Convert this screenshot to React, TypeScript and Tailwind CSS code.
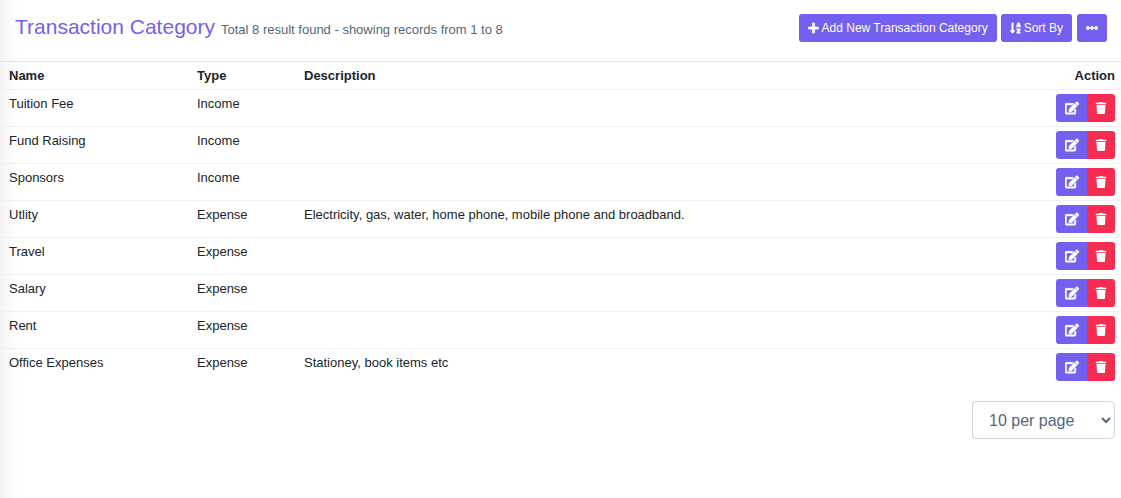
import { FaEdit, FaEllipsisH, FaPlus, FaSortAlphaDown, FaTrash } from "react-icons/fa";

const categories = [
  { name: "Tuition Fee", type: "Income", description: "" },
  { name: "Fund Raising", type: "Income", description: "" },
  { name: "Sponsors", type: "Income", description: "" },
  {
    name: "Utlity",
    type: "Expense",
    description: "Electricity, gas, water, home phone, mobile phone and broadband.",
  },
  { name: "Travel", type: "Expense", description: "" },
  { name: "Salary", type: "Expense", description: "" },
  { name: "Rent", type: "Expense", description: "" },
  { name: "Office Expenses", type: "Expense", description: "Stationey, book items etc" },
];

const toolbarButton =
  "inline-flex h-7 items-center gap-[3px] rounded-[3px] bg-[#7460ee] px-[9px] text-xs text-white hover:bg-[#563dea]";

const TransactionCategoryPage = () => {
  return (
    <main className="min-h-screen bg-linear-to-r from-[#f4f4f4] to-white to-[18px] font-['Liberation_Sans',Arial,sans-serif] text-[13px] leading-5 text-[#212529]">
      {/* Header */}
      <header className="flex items-start justify-between pt-3.5 pr-3.5 pb-[19px] pl-[15px]">
        <div className="flex items-baseline gap-1.5">
          <h1 className="text-[21px] leading-[26px] text-[#7460ee]">Transaction Category</h1>
          <small className="text-[13px] text-[#54667a]">
            Total {categories.length} result found - showing records from 1 to {categories.length}
          </small>
        </div>
        <div className="flex">
          <button type="button" className={`${toolbarButton} mr-1`}>
            <FaPlus className="h-3 w-[11px] stroke-[24]" />
            Add New Transaction Category
          </button>
          <button type="button" className={`${toolbarButton} mr-[5px]`}>
            <FaSortAlphaDown className="h-3 w-[11px] stroke-[20]" />
            Sort By
          </button>
          <button type="button" aria-label="More options" className={toolbarButton}>
            <FaEllipsisH className="size-3 stroke-[20]" />
          </button>
        </div>
      </header>

      {/* Categories */}
      <table className="w-full border-collapse">
        <thead>
          <tr className="border-t border-[#dee2e6] text-left leading-[19px]">
            <th className="w-[188px] py-1 pl-[9px]">Name</th>
            <th className="w-[107px] py-1 pl-[9px]">Type</th>
            <th className="py-1 pl-[9px]">Description</th>
            <th className="py-1 pr-1.5 text-right">Action</th>
          </tr>
        </thead>
        <tbody>
          {categories.map((category) => (
            <tr key={category.name} className="border-t border-[#f0f1f2] align-top">
              <td className="py-1 pl-[9px]">{category.name}</td>
              <td className="py-1 pl-[9px]">{category.type}</td>
              <td className="py-1 pl-[9px]">{category.description}</td>
              <td className="py-1 pr-1.5">
                <div className="flex justify-end">
                  <button
                    type="button"
                    aria-label={`Edit ${category.name}`}
                    className="flex h-7 w-[31px] items-center justify-center rounded-l-[3px] bg-[#7460ee] text-white hover:bg-[#563dea]"
                  >
                    <FaEdit className="size-3.5 stroke-[20]" />
                  </button>
                  <button
                    type="button"
                    aria-label={`Delete ${category.name}`}
                    className="flex h-7 w-7 items-center justify-center rounded-r-[3px] bg-[#f62d51] text-white hover:bg-[#f20a34]"
                  >
                    <FaTrash className="size-3" />
                  </button>
                </div>
              </td>
            </tr>
          ))}
        </tbody>
      </table>

      {/* Page size */}
      <div className="flex justify-end pt-4 pr-1.5">
        <select
          aria-label="Records per page"
          defaultValue="10"
          className="h-[38px] w-[143px] rounded border border-[#ced4da] bg-white pl-3 text-base text-[#54667a]"
        >
          <option value="10">10 per page</option>
          <option value="25">25 per page</option>
          <option value="50">50 per page</option>
          <option value="100">100 per page</option>
        </select>
      </div>
    </main>
  );
};

export default TransactionCategoryPage;
